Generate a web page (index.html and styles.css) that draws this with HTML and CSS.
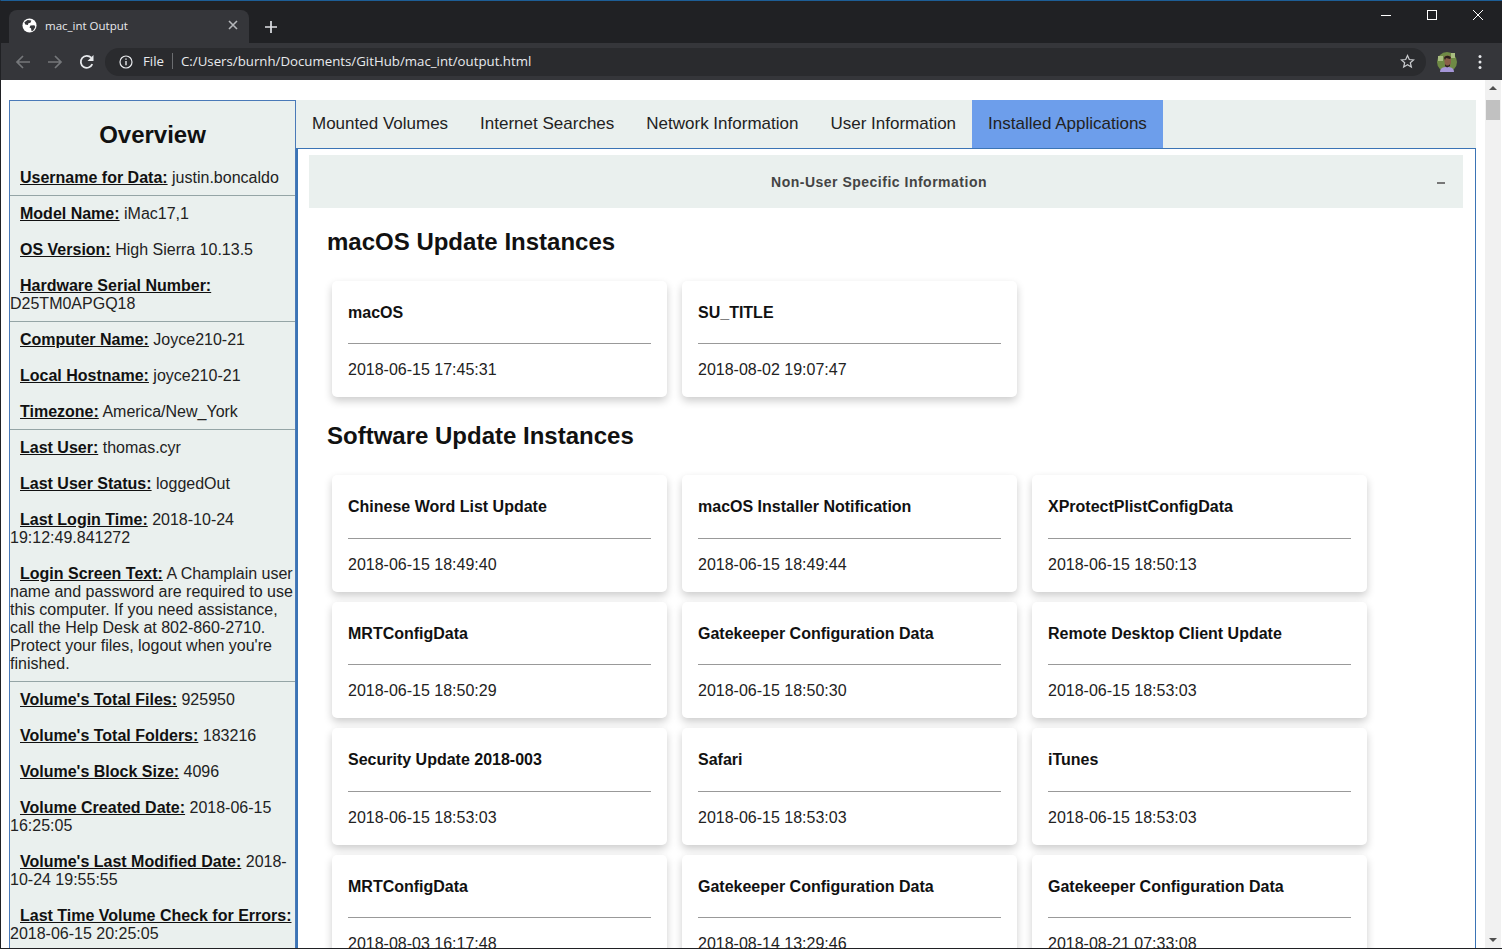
FILE: index.html
```html
<!DOCTYPE html>
<html lang="en">
<head>
    <meta charset="UTF-8">
    <title>mac_int Output</title>
    <link rel="stylesheet" href="styles.css">
</head>
<body>
    <div class="window">
        <div class="tabstrip">
            <div class="tab">
                <svg class="favicon" viewBox="0 0 16 16" width="15" height="15"><circle cx="8" cy="8" r="7.500" fill="#fff"/><path d="M2.500 4.500L6 2l4 .6-1 2.400-2.200.6L6.300 7.500 3.500 7zM9 8l4.200-.2 1 1.800-2.200 3.600-1.800 1-.6-3.200L8 10z" fill="#35363a"/></svg>
                <span class="tab-title">mac_int Output</span>
                <svg class="tab-close" viewBox="0 0 10 10" width="10" height="10"><path d="M1 1l8 8M9 1l-8 8" stroke="#b5b7ba" stroke-width="1.600"/></svg>
            </div>
            <svg class="new-tab" viewBox="0 0 12 12" width="12" height="12"><path d="M6 0v12M0 6h12" stroke="#dfe1e5" stroke-width="1.700"/></svg>
            <div class="window-controls">
                <svg viewBox="0 0 12 12" width="12" height="12"><path d="M1 6.500h10" stroke="#fff" stroke-width="1"/></svg>
                <svg viewBox="0 0 12 12" width="12" height="12"><rect x="1.500" y="1.500" width="9" height="9" fill="none" stroke="#fff" stroke-width="1"/></svg>
                <svg viewBox="0 0 12 12" width="12" height="12"><path d="M1 1l10 10M11 1l-10 10" stroke="#fff" stroke-width="1"/></svg>
            </div>
        </div>
        <div class="toolbar">
            <svg class="nav-icon" viewBox="0 0 16 16" width="16" height="16"><path d="M15 8H2M8 2L2 8l6 6" fill="none" stroke="#75777a" stroke-width="1.700"/></svg>
            <svg class="nav-icon" viewBox="0 0 16 16" width="16" height="16"><path d="M1 8h13M8 2l6 6-6 6" fill="none" stroke="#75777a" stroke-width="1.700"/></svg>
            <svg class="nav-icon" viewBox="0 0 16 16" width="16" height="16"><path d="M13.300 10.200A6 6 0 1 1 12.200 3.700" fill="none" stroke="#e8eaed" stroke-width="1.800"/><path d="M14.500 1v6h-6z" fill="#e8eaed"/></svg>
            <div class="omnibox">
                <svg viewBox="0 0 14 14" width="14" height="14"><circle cx="7" cy="7" r="6" fill="none" stroke="#e8eaed" stroke-width="1.200"/><path d="M7 6v4.200M7 3.400v1.400" stroke="#e8eaed" stroke-width="1.400"/></svg>
                <span class="omni-file">File</span>
                <span class="omni-url">C:/Users/burnh/Documents/GitHub/mac_int/output.html</span>
                <svg class="star" viewBox="0 0 16 16" width="15" height="15"><path d="M8 1.600l1.900 4.300 4.600.4-3.500 3 1.100 4.600L8 11.500l-4.100 2.400 1.100-4.600-3.500-3 4.600-.4z" fill="none" stroke="#c9cbce" stroke-width="1.300"/></svg>
            </div>
            <svg class="avatar" viewBox="0 0 20 20" width="20" height="20"><circle cx="10" cy="10" r="10" fill="#6f8a45"/><path d="M1 4h5v5H1zM14 1h4v5h-4z" fill="#a9bd80"/><path d="M3 20c0-4 3-5 7-5s7 1 7 5z" fill="#a596d8"/><path d="M7 5c1-2 6-2 7 0v6c-1 4-5 5-6 3z" fill="#8a5f4a"/><path d="M7 6c1-3 6-3 7 0l-1 1-4-1-1 2zM8 12c1 2 4 2 5 0v2l-3 1.500L8 14z" fill="#2b201c"/></svg>
            <svg class="menu" viewBox="0 0 4 16" width="4" height="16"><circle cx="2" cy="2.500" r="1.500" fill="#e8eaed"/><circle cx="2" cy="8" r="1.500" fill="#e8eaed"/><circle cx="2" cy="13.500" r="1.500" fill="#e8eaed"/></svg>
        </div>
        <div class="viewport">
            <div class="page">
                <aside class="overview">
                    <h2>Overview</h2>
                    <section>
                        <p><b>Username for Data:</b> justin.boncaldo</p>
                    </section>
                    <section>
                        <p><b>Model Name:</b> iMac17,1</p>
                        <p><b>OS Version:</b> High Sierra 10.13.5</p>
                        <p><b>Hardware Serial Number:</b> D25TM0APGQ18</p>
                    </section>
                    <section>
                        <p><b>Computer Name:</b> Joyce210-21</p>
                        <p><b>Local Hostname:</b> joyce210-21</p>
                        <p><b>Timezone:</b> America/New_York</p>
                    </section>
                    <section>
                        <p><b>Last User:</b> thomas.cyr</p>
                        <p><b>Last User Status:</b> loggedOut</p>
                        <p><b>Last Login Time:</b> 2018-10-24 19:12:49.841272</p>
                        <p><b>Login Screen Text:</b> A Champlain user name and password are required to use this computer. If you need assistance, call the Help Desk at 802-860-2710. Protect your files, logout when you're finished.</p>
                    </section>
                    <section>
                        <p><b>Volume's Total Files:</b> 925950</p>
                        <p><b>Volume's Total Folders:</b> 183216</p>
                        <p><b>Volume's Block Size:</b> 4096</p>
                        <p><b>Volume Created Date:</b> 2018-06-15 16:25:05</p>
                        <p><b>Volume's Last Modified Date:</b> 2018-10-24 19:55:55</p>
                        <p><b>Last Time Volume Check for Errors:</b> 2018-06-15 20:25:05</p>
                    </section>
                </aside>
                <main class="report">
                    <nav class="tabs">
                        <a>Mounted Volumes</a>
                        <a>Internet Searches</a>
                        <a>Network Information</a>
                        <a>User Information</a>
                        <a class="active">Installed Applications</a>
                    </nav>
                    <div class="tab-body">
                        <div class="collapsible">
                            <span>Non-User Specific Information</span>
                            <i class="minus"></i>
                        </div>
                        <h2 class="group-title">macOS Update Instances</h2>
                        <div class="cards">
                            <div class="card"><h4>macOS</h4><hr><p>2018-06-15 17:45:31</p></div>
                            <div class="card"><h4>SU_TITLE</h4><hr><p>2018-08-02 19:07:47</p></div>
                        </div>
                        <h2 class="group-title">Software Update Instances</h2>
                        <div class="cards">
                            <div class="card"><h4>Chinese Word List Update</h4><hr><p>2018-06-15 18:49:40</p></div>
                            <div class="card"><h4>macOS Installer Notification</h4><hr><p>2018-06-15 18:49:44</p></div>
                            <div class="card"><h4>XProtectPlistConfigData</h4><hr><p>2018-06-15 18:50:13</p></div>
                            <div class="card"><h4>MRTConfigData</h4><hr><p>2018-06-15 18:50:29</p></div>
                            <div class="card"><h4>Gatekeeper Configuration Data</h4><hr><p>2018-06-15 18:50:30</p></div>
                            <div class="card"><h4>Remote Desktop Client Update</h4><hr><p>2018-06-15 18:53:03</p></div>
                            <div class="card"><h4>Security Update 2018-003</h4><hr><p>2018-06-15 18:53:03</p></div>
                            <div class="card"><h4>Safari</h4><hr><p>2018-06-15 18:53:03</p></div>
                            <div class="card"><h4>iTunes</h4><hr><p>2018-06-15 18:53:03</p></div>
                            <div class="card"><h4>MRTConfigData</h4><hr><p>2018-08-03 16:17:48</p></div>
                            <div class="card"><h4>Gatekeeper Configuration Data</h4><hr><p>2018-08-14 13:29:46</p></div>
                            <div class="card"><h4>Gatekeeper Configuration Data</h4><hr><p>2018-08-21 07:33:08</p></div>
                        </div>
                    </div>
                </main>
            </div>
            <div class="scrollbar">
                <i class="arrow-up"></i>
                <div class="thumb"></div>
                <i class="arrow-down"></i>
            </div>
        </div>
    </div>
</body>
</html>
```

FILE: styles.css
```css
html, body {
    margin: 0;
    padding: 0;
    height: 100%;
    overflow: hidden;
}
body {
    font-family: "Liberation Sans", Arial, sans-serif;
    color: #111;
    background: #fff;
}
.window {
    height: 949px;
    box-sizing: border-box;
    display: flex;
    flex-direction: column;
    border-top: 1px solid #1d5e96;
    border-left: 1px solid #202124;
    border-bottom: 1px solid #202124;
}

/* browser chrome */
.tabstrip {
    height: 42px;
    flex: none;
    display: flex;
    align-items: flex-end;
    padding-left: 8px;
    background: #202124;
}
.tab {
    width: 240px;
    height: 33px;
    box-sizing: border-box;
    display: flex;
    align-items: center;
    padding: 0 0 3px 13px;
    background: #35363a;
    border-radius: 8px 8px 0 0;
    color: #e8eaed;
}
.tab-title {
    margin-left: 8px;
    font: 11.500px "Open Sans", sans-serif;
    flex: 1;
}
.tab-close {
    margin-right: 11px;
}
.new-tab {
    margin: 0 0 10px 16px;
}
.window-controls {
    align-self: flex-start;
    margin-left: auto;
    display: flex;
    gap: 34px;
    padding: 8px 18px 0 0;
}
.toolbar {
    height: 37px;
    flex: none;
    display: flex;
    align-items: center;
    background: #35363a;
}
.nav-icon {
    margin-left: 16px;
}
.nav-icon:first-child {
    margin-left: 14px;
}
.omnibox {
    flex: 1;
    height: 28px;
    margin-left: 10px;
    display: flex;
    align-items: center;
    padding: 0 11px 0 14px;
    border-radius: 14px;
    background: #2a2b2e;
    color: #e8eaed;
    font: 13.250px "Open Sans", sans-serif;
}
.omni-file {
    margin: 0 0 2px 10px;
    padding-right: 8px;
    border-right: 1px solid #6b6d70;
    line-height: 16px;
}
.omni-url {
    margin: 0 0 2px 8px;
    flex: 1;
}
.avatar {
    margin-left: 11px;
}
.menu {
    margin: 0 20px 0 21px;
}

/* page */
.viewport {
    flex: 1;
    min-height: 0;
    display: flex;
}
.page {
    flex: 1;
    min-width: 0;
    display: flex;
    align-items: flex-start;
    padding: 20px 9px 0 8px;
    overflow: hidden;
}
.overview {
    width: 285px;
    flex: none;
    border: 1px solid #4a7ab8;
    background: #eaf0ee;
    font-size: 16px;
    line-height: 18px;
}
.overview h2 {
    margin: 0;
    padding: 20px 0 20px;
    font-size: 24px;
    line-height: 28px;
    text-align: center;
}
.overview section {
    padding: 9px 0 8px;
    border-top: 1px solid #95a5a6;
}
.overview section:first-of-type {
    border-top: 0;
    padding-top: 0;
}
.overview p {
    margin: 0 0 18px;
    text-indent: 10px;
    color: #222;
}
.overview p:last-child {
    margin-bottom: 0;
}
.overview b {
    color: #111;
    text-decoration: underline;
}
.report {
    flex: 1;
    min-width: 0;
}
.tabs {
    height: 48px;
    display: flex;
    background: #eaf0ee;
}
.tabs a {
    padding: 0 16px;
    font-size: 17px;
    line-height: 47px;
    color: #222;
}
.tabs a.active {
    background: #6d9eeb;
}
.tab-body {
    border: 1px solid #3b74b5;
    border-left-width: 2px;
    padding: 6px 12px 0 11px;
    background: #fff;
}
.collapsible {
    height: 53px;
    display: flex;
    align-items: center;
    justify-content: center;
    padding-right: 14px;
    position: relative;
    background: #eaf0ee;
    font-size: 14px;
    font-weight: bold;
    letter-spacing: 0.500px;
    color: #444;
}
.minus {
    position: absolute;
    right: 18px;
    top: 27px;
    width: 8px;
    height: 2px;
    background: #777;
}
.group-title {
    margin: 0;
    padding: 20px 0 25px 18px;
    font-size: 24px;
    line-height: 28px;
}
.cards {
    display: grid;
    grid-template-columns: repeat(3, 335px);
    column-gap: 15px;
    row-gap: 10.100px;
    padding-left: 23px;
    margin-bottom: 5px;
}
.card {
    height: 116.400px;
    box-sizing: border-box;
    padding: 22px 16px 0;
    border-radius: 5px;
    background: #fff;
    box-shadow: 0 4px 8px rgba(0, 0, 0, 0.2);
}
.card h4 {
    margin: 0;
    font-size: 16px;
    line-height: 20px;
    font-weight: bold;
    color: #111;
}
.card hr {
    margin: 20.300px 0 16px;
    border: 0;
    border-top: 1px solid #999;
}
.card p {
    margin: 0;
    font-size: 16px;
    line-height: 20px;
    color: #222;
}

/* scrollbar */
.scrollbar {
    width: 16px;
    flex: none;
    position: relative;
    background: #f1f1f1;
    margin-right: 1px;
}
.thumb {
    position: absolute;
    top: 20px;
    left: 1px;
    width: 14px;
    height: 20px;
    background: #c1c1c1;
}
.arrow-up, .arrow-down {
    position: absolute;
    left: 4px;
    width: 0;
    height: 0;
    border-left: 4px solid transparent;
    border-right: 4px solid transparent;
}
.arrow-up {
    top: 6px;
    border-bottom: 4px solid #505050;
}
.arrow-down {
    bottom: 6px;
    border-top: 4px solid #505050;
}
```
